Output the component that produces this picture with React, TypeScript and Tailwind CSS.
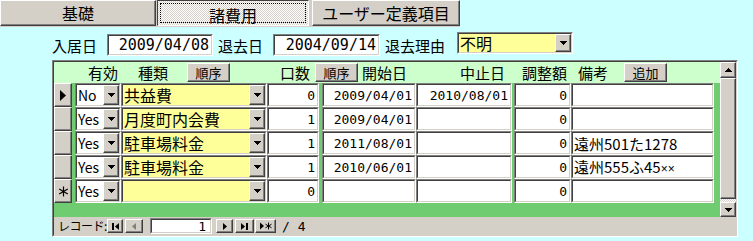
import React from 'react';

const jp = "font-['Noto_Sans_CJK_JP',sans-serif]";
const mono = "font-['DejaVu_Sans_Mono','Noto_Sans_CJK_JP',monospace]";

const raised =
  'border border-t-white border-l-white border-r-[#404040] border-b-[#404040] shadow-[inset_-1px_-1px_0_#808080]';
const sunkenOuter = 'border border-t-[#808080] border-l-[#808080] border-r-white border-b-white';
const sunkenInner = 'border border-t-[#404040] border-l-[#404040] border-r-[#d4d0c8] border-b-[#d4d0c8]';

type Row = {
  mark?: 'cur' | 'new';
  valid: string;
  kind: string;
  qty: string;
  start: string;
  stop: string;
  adj: string;
  note: React.ReactNode;
};

const rows: Row[] = [
  { mark: 'cur', valid: 'No', kind: '共益費', qty: '0', start: '2009/04/01', stop: '2010/08/01', adj: '0', note: '' },
  { valid: 'Yes', kind: '月度町内会費', qty: '1', start: '2009/04/01', stop: '', adj: '0', note: '' },
  { valid: 'Yes', kind: '駐車場料金', qty: '1', start: '2011/08/01', stop: '', adj: '0', note: '遠州501た1278' },
  {
    valid: 'Yes',
    kind: '駐車場料金',
    qty: '1',
    start: '2010/06/01',
    stop: '',
    adj: '0',
    note: (
      <>
        遠州555ふ45<span className="font-['Liberation_Sans',sans-serif] text-[12px]">××</span>
      </>
    ),
  },
  { mark: 'new', valid: 'Yes', kind: '', qty: '0', start: '', stop: '', adj: '0', note: '' },
];

const ArrowDown = () => (
  <svg width="7" height="4" viewBox="0 0 7 4" shapeRendering="crispEdges">
    <rect x="0" y="0" width="7" height="1" />
    <rect x="1" y="1" width="5" height="1" />
    <rect x="2" y="2" width="3" height="1" />
    <rect x="3" y="3" width="1" height="1" />
  </svg>
);

const ArrowUp = () => (
  <svg width="7" height="4" viewBox="0 0 7 4" shapeRendering="crispEdges">
    <rect x="3" y="0" width="1" height="1" />
    <rect x="2" y="1" width="3" height="1" />
    <rect x="1" y="2" width="5" height="1" />
    <rect x="0" y="3" width="7" height="1" />
  </svg>
);

const DropBtn = () => (
  <div className={`flex h-full w-[16px] shrink-0 items-center justify-center bg-[#d4d0c8] ${raised}`}>
    <ArrowDown />
  </div>
);

// sunken cell of the continuous form
const Cell = ({ w, bg = 'bg-white', children }: { w: string; bg?: string; children?: React.ReactNode }) => (
  <div className={`h-full shrink-0 ${w} ${sunkenOuter}`}>
    <div className={`flex h-full w-full items-center ${bg} ${sunkenInner}`}>{children}</div>
  </div>
);

const Tabs = () => (
  <div className="flex h-[27px] w-[460px] items-start gap-[1px] bg-[#d4d0c8]">
    <div className={`flex h-[26px] w-[156px] items-center justify-center text-[16px] leading-none ${raised}`}>
      基礎
    </div>
    <div className="flex h-[26px] w-[152px] border border-t-[#404040] border-l-[#404040] border-r-white border-b-white bg-[repeating-conic-gradient(#d4d0c8_0_25%,#ffffff_0_50%)] bg-[length:2px_2px] p-[2px]">
      <div className="flex flex-1 items-center justify-center border border-dotted border-black pt-[3px] text-[16px] leading-none">
        諸費用
      </div>
    </div>
    <div className={`ml-[2px] flex h-[26px] w-[148px] items-center justify-center text-[16px] leading-none ${raised}`}>
      ユーザー定義項目
    </div>
  </div>
);

const DateBox = ({ w, value }: { w: string; value: string }) => (
  <div className={`h-[22px] ${w} ${sunkenOuter}`}>
    <div className={`flex h-full items-center justify-end bg-white pr-[2px] text-[15px] leading-none ${mono} ${sunkenInner}`}>
      {value}
    </div>
  </div>
);

const DatesRow = () => (
  <div className="mt-[7px] flex h-[22px] items-center pl-[52px] text-[15px] leading-none">
    <span className="w-[45px]">入居日</span>
    <div className="ml-[10px]">
      <DateBox w="w-[106px]" value="2009/04/08" />
    </div>
    <span className="ml-[5px] w-[45px]">退去日</span>
    <div className="ml-[10px]">
      <DateBox w="w-[107px]" value="2004/09/14" />
    </div>
    <span className="ml-[5px] w-[60px]">退去理由</span>
    <div className={`mb-[4px] ml-[12px] h-[22px] w-[116px] ${sunkenOuter}`}>
      <div className={`flex h-full items-stretch bg-[#ffff99] ${sunkenInner}`}>
        <span className="flex flex-1 items-center pl-[1px] text-[16px]">不明</span>
        <DropBtn />
      </div>
    </div>
  </div>
);

const SmallBtn = ({ label, ml }: { label: string; ml: string }) => (
  <div className={`flex h-[19px] w-[43px] shrink-0 items-center justify-center bg-[#d4d0c8] text-[13px] leading-none ${ml} ${raised}`}>
    {label}
  </div>
);

const Header = () => (
  <div className="flex h-[21px] items-center bg-[#ccffcc] text-[15px] leading-none">
    <span className="ml-[34px] w-[30px] shrink-0">有効</span>
    <span className="ml-[20px] w-[30px] shrink-0">種類</span>
    <SmallBtn label="順序" ml="ml-[19px]" />
    <span className="ml-[50px] w-[32px] shrink-0">口数</span>
    <SmallBtn label="順序" ml="ml-[3px]" />
    <span className="ml-[4px] w-[45px] shrink-0">開始日</span>
    <span className="ml-[53px] w-[45px] shrink-0">中止日</span>
    <span className="ml-[17px] w-[45px] shrink-0">調整額</span>
    <span className="ml-[11px] w-[30px] shrink-0">備考</span>
    <SmallBtn label="追加" ml="ml-[16px]" />
  </div>
);

const Marker = ({ mark }: { mark?: 'cur' | 'new' }) => {
  if (mark === 'cur')
    return (
      <svg width="6" height="11" viewBox="0 0 6 11">
        <path d="M0 0L6 5.5L0 11Z" />
      </svg>
    );
  if (mark === 'new')
    return (
      <svg width="11" height="11" viewBox="0 0 11 11" stroke="black" strokeWidth="1.2">
        <path d="M5.5 0.5V10.5M1.2 3L9.8 8M1.2 8L9.8 3" />
      </svg>
    );
  return null;
};

const DataRow = ({ r }: { r: Row }) => (
  <div className="flex h-[24px] bg-[#70cc70] text-[13px] leading-none">
    <div className={`flex h-full w-[18px] shrink-0 items-center justify-center bg-[#d4d0c8] ${raised}`}>
      <Marker mark={r.mark} />
    </div>
    <div className="w-[3px] shrink-0" />
    <Cell w="w-[46px]">
      <span className={`flex-1 pl-[1px] text-[14px] ${jp}`}>{r.valid}</span>
      <DropBtn />
    </Cell>
    <Cell w="w-[146px]" bg="bg-[#ffff99]">
      <span className="flex-1 pl-[1px] text-[16px]">{r.kind}</span>
      <DropBtn />
    </Cell>
    <Cell w="w-[52px]">
      <span className={`flex-1 pr-[2px] text-right ${mono}`}>{r.qty}</span>
    </Cell>
    <div className="w-[3px] shrink-0" />
    <Cell w="w-[94px]">
      <span className={`flex-1 pr-[2px] text-right ${mono}`}>{r.start}</span>
    </Cell>
    <Cell w="w-[96px]">
      <span className={`flex-1 pr-[2px] text-right ${mono}`}>{r.stop}</span>
    </Cell>
    <div className="w-[2px] shrink-0" />
    <Cell w="w-[57px]">
      <span className={`flex-1 pr-[2px] text-right ${mono}`}>{r.adj}</span>
    </Cell>
    <Cell w="w-[143px]">
      <span className="flex-1 whitespace-nowrap pl-[1px] text-[15px]">{r.note}</span>
    </Cell>
  </div>
);

const ScrollBar = () => (
  <div className="flex w-[16px] shrink-0 flex-col bg-[#d4d0c8]">
    <div className={`flex h-[16px] items-center justify-center bg-[#d4d0c8] ${raised}`}>
      <ArrowUp />
    </div>
    <div className={`flex-1 bg-[#d4d0c8] ${raised}`} />
    <div className="h-[3px] bg-[repeating-conic-gradient(#d4d0c8_0_25%,#ffffff_0_50%)] bg-[length:2px_2px]" />
    <div className={`flex h-[15px] items-center justify-center bg-[#d4d0c8] ${raised}`}>
      <ArrowDown />
    </div>
  </div>
);

const NavBtn = ({ children, w, ml }: { children: React.ReactNode; w: string; ml: string }) => (
  <div className={`flex h-[14px] shrink-0 items-center justify-center bg-[#d4d0c8] ${w} ${ml} ${raised}`}>
    {children}
  </div>
);

const NavBar = () => (
  <div className="flex h-[18px] items-center bg-[#d4d0c8] text-[12px] leading-none">
    <span className="ml-[4px] w-[48px] shrink-0 whitespace-nowrap tracking-[-0.5px]">レコード:</span>
    <NavBtn w="w-[16px]" ml="ml-[1px]">
      <svg width="7" height="7" viewBox="0 0 7 7">
        <rect x="0" y="0" width="2" height="7" />
        <path d="M7 0V7L3 3.5Z" />
      </svg>
    </NavBtn>
    <NavBtn w="w-[18px]" ml="ml-[2px]">
      <svg width="4" height="7" viewBox="0 0 4 7" fill="#808080">
        <path d="M4 0V7L0 3.5Z" />
      </svg>
    </NavBtn>
    <div className={`ml-[7px] h-[16px] w-[62px] shrink-0 ${sunkenOuter}`}>
      <div className={`flex h-full items-center justify-end bg-white pr-[4px] text-[13px] ${mono} ${sunkenInner}`}>1</div>
    </div>
    <NavBtn w="w-[17px]" ml="ml-[4px]">
      <svg width="4" height="7" viewBox="0 0 4 7">
        <path d="M0 0V7L4 3.5Z" />
      </svg>
    </NavBtn>
    <NavBtn w="w-[19px]" ml="ml-[2px]">
      <svg width="7" height="7" viewBox="0 0 7 7">
        <path d="M0 0V7L4 3.5Z" />
        <rect x="5" y="0" width="2" height="7" />
      </svg>
    </NavBtn>
    <NavBtn w="w-[21px]" ml="ml-[1px]">
      <svg width="12" height="8" viewBox="0 0 12 8" stroke="black">
        <path d="M0 0.5V7.5L4 4Z" stroke="none" />
        <path d="M8.5 0.5V7.5M5.5 2.2L11.5 5.8M5.5 5.8L11.5 2.2" strokeWidth="1" />
      </svg>
    </NavBtn>
    <span className={`ml-[6px] text-[13px] ${mono}`}>/ 4</span>
  </div>
);

const Grid = () => (
  <div className={`ml-[52px] mt-[4px] h-[177px] w-[686px] ${sunkenOuter}`}>
    <div className={`flex h-full flex-col ${sunkenInner}`}>
      <div className="flex h-[155px]">
        <div className="flex flex-1 flex-col bg-[#70cc70]">
          <Header />
          {rows.map((r, i) => (
            <DataRow key={i} r={r} />
          ))}
        </div>
        <ScrollBar />
      </div>
      <NavBar />
    </div>
  </div>
);

export default function App() {
  return (
    <div className={`h-[241px] w-[753px] overflow-hidden bg-[#ccffff] text-black ${jp}`}>
      <Tabs />
      <DatesRow />
      <Grid />
    </div>
  );
}
